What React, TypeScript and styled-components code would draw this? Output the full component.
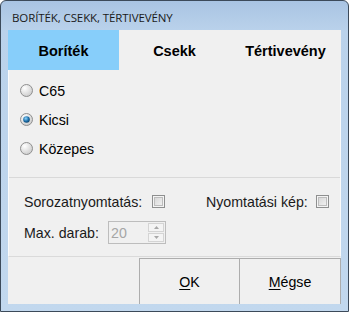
import styled, { createGlobalStyle } from 'styled-components';

const GlobalStyle = createGlobalStyle`
  html, body {
    margin: 0;
    padding: 0;
    background: #ffffff;
  }
  * {
    box-sizing: border-box;
  }
`;

const Window = styled.div`
  width: 349px;
  height: 312px;
  display: flex;
  flex-direction: column;
  border: 1px solid #3c4a5a;
  border-radius: 6px 6px 0 0;
  background: linear-gradient(180deg, #a9c4e3 0px, #bad2eb 30px, #c2d8ee 100%);
  padding: 0 7px 7px 7px;
  font-family: 'Liberation Sans', Arial, sans-serif;
  color: #000;
`;

const TitleBar = styled.div`
  height: 29px;
  display: flex;
  align-items: center;
  padding-left: 4px;
  padding-top: 3px;
  font-family: 'Open Sans', 'Noto Sans', sans-serif;
  font-size: 11.5px;
  color: #1a1a1a;
  letter-spacing: -0.1px;
`;

const Client = styled.div`
  flex: 1;
  display: flex;
  flex-direction: column;
  background: #f0f0f0;
`;

const TabRow = styled.div`
  height: 40px;
  display: grid;
  grid-template-columns: repeat(3, 1fr);
`;

const Tab = styled.div<{ active?: boolean }>`
  display: flex;
  align-items: center;
  justify-content: center;
  font-weight: bold;
  font-size: 14.5px;
  background: ${({ active }) => (active ? '#87cefa' : '#f0f0f0')};
  padding-top: 1px;
`;

const Panel = styled.div`
  height: 187px;
  display: flex;
  flex-direction: column;
  border-left: 1px solid #fbfbfb;
  border-right: 1px solid #fbfbfb;
  border-bottom: 1px solid #dadada;
`;

const RadioGroup = styled.div`
  height: 108px;
  display: flex;
  flex-direction: column;
  gap: 14px;
  padding: 13px 0 0 11px;
  border-bottom: 1px solid #d9d9d9;
`;

const RadioRow = styled.label`
  display: flex;
  align-items: center;
  gap: 6px;
  font-size: 14.2px;
  height: 15px;
`;

const RadioMark = ({ checked }: { checked?: boolean }) => (
  <svg width="13" height="13" viewBox="0 0 13 13">
    <defs>
      <radialGradient id={checked ? 'rgc' : 'rgu'} cx="0.35" cy="0.3" r="0.8">
        <stop offset="0" stopColor="#ffffff" />
        <stop offset="1" stopColor="#c8c8c8" />
      </radialGradient>
      <radialGradient id="dot" cx="0.4" cy="0.35" r="0.7">
        <stop offset="0" stopColor="#8fd6ff" />
        <stop offset="0.6" stopColor="#1c6ea8" />
        <stop offset="1" stopColor="#0d3f66" />
      </radialGradient>
    </defs>
    <circle cx="6.5" cy="6.5" r="6" fill={`url(#${checked ? 'rgc' : 'rgu'})`} stroke="#8f8f8f" strokeWidth="1" />
    {checked && <circle cx="6.5" cy="6.5" r="3.3" fill="url(#dot)" />}
  </svg>
);

const Options = styled.div`
  flex: 1;
  display: flex;
  flex-direction: column;
  padding: 15px 0 0 15px;
  gap: 14px;
`;

const OptionRow = styled.div`
  display: flex;
  align-items: center;
  font-size: 14.2px;
  height: 17px;
`;

const Label = styled.span<{ width?: number }>`
  width: ${({ width }) => (width ? `${width}px` : 'auto')};
  color: #1a1a1a;
`;

const CheckBox = styled.span`
  width: 13px;
  height: 13px;
  border: 1px solid #8e8f8f;
  background: linear-gradient(135deg, #d2d2d2, #f6f6f6);
  box-shadow: inset 0 0 0 1px #f4f4f4, inset 0 0 0 2px #bdbdbd;
  display: inline-block;
`;

const Spacer = styled.span<{ width: number }>`
  width: ${({ width }) => width}px;
`;

const NumBox = styled.div`
  width: 58px;
  height: 23px;
  border: 1px solid #bdbdbd;
  background: #f0f0f0;
  display: flex;
  align-items: stretch;
`;

const NumValue = styled.div`
  flex: 1;
  display: flex;
  align-items: center;
  padding-left: 2px;
  color: #a6a6a6;
  font-size: 14.2px;
`;

const Spin = styled.div`
  width: 17px;
  display: flex;
  flex-direction: column;
  padding: 1px 1px 1px 0;
  gap: 1px;
`;

const SpinBtn = styled.div`
  flex: 1;
  border: 1px solid #d4d4d4;
  background: #f4f4f4;
  display: flex;
  align-items: center;
  justify-content: center;
`;

const Arrow = ({ up }: { up?: boolean }) => (
  <svg width="5" height="3" viewBox="0 0 5 3">
    <path d={up ? 'M0 3 L2.5 0 L5 3 Z' : 'M0 0 L5 0 L2.5 3 Z'} fill="#a8a8a8" />
  </svg>
);

const ButtonBar = styled.div`
  flex: 1;
  display: flex;
  justify-content: flex-end;
  padding-top: 1px;
`;

const Button = styled.div`
  width: 101px;
  display: flex;
  align-items: center;
  justify-content: center;
  font-size: 14.2px;
  background: #f0f0f0;
  border: 1px solid #adadad;
  border-bottom: none;
  & + & {
    border-left: none;
  }
  u {
    text-underline-offset: 2px;
  }
`;

export default function App() {
  return (
    <>
      <GlobalStyle />
      <Window>
        <TitleBar>BORÍTÉK, CSEKK, TÉRTIVEVÉNY</TitleBar>
        <Client>
          <TabRow>
            <Tab active>Boríték</Tab>
            <Tab>Csekk</Tab>
            <Tab>Tértivevény</Tab>
          </TabRow>
          <Panel>
            <RadioGroup>
              <RadioRow>
                <RadioMark />
                C65
              </RadioRow>
              <RadioRow>
                <RadioMark checked />
                Kicsi
              </RadioRow>
              <RadioRow>
                <RadioMark />
                Közepes
              </RadioRow>
            </RadioGroup>
            <Options>
              <OptionRow>
                <Label width={128}>Sorozatnyomtatás:</Label>
                <CheckBox />
                <Spacer width={41} />
                <Label width={110}>Nyomtatási kép:</Label>
                <CheckBox />
              </OptionRow>
              <OptionRow>
                <Label width={84}>Max. darab:</Label>
                <NumBox>
                  <NumValue>20</NumValue>
                  <Spin>
                    <SpinBtn>
                      <Arrow up />
                    </SpinBtn>
                    <SpinBtn>
                      <Arrow />
                    </SpinBtn>
                  </Spin>
                </NumBox>
              </OptionRow>
            </Options>
          </Panel>
          <ButtonBar>
            <Button>
              <span>
                <u>O</u>K
              </span>
            </Button>
            <Button>
              <span>
                <u>M</u>égse
              </span>
            </Button>
          </ButtonBar>
        </Client>
      </Window>
    </>
  );
}
